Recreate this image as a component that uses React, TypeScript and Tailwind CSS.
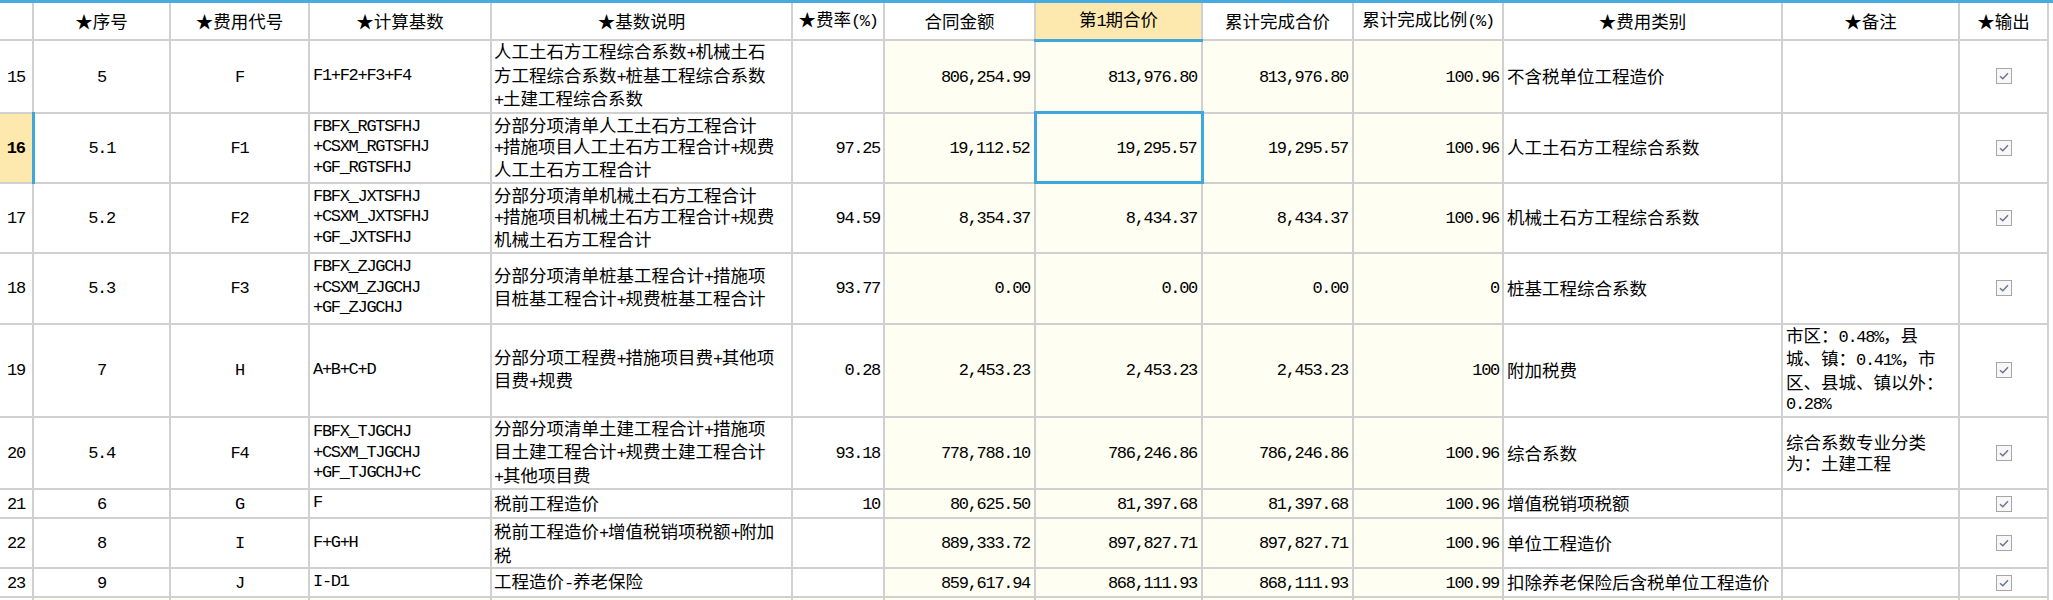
import React from "react";

type Row = {
  no: string;
  seq: string;
  code: string;
  base: string[];
  desc: string[];
  rate: string;
  contract: string;
  period: string;
  total: string;
  ratio: string;
  kind: string;
  note: string[];
  h: string;
  active?: boolean;
  tail?: boolean;
};

const MONO = "[font-family:'Liberation_Mono',monospace] text-[17px] tracking-[-1.3px]";
const GRID = "border-2 border-[#d0d0d0]";
const CREAM = "bg-[#fefef3]";

const headers = [
  "",
  "★序号",
  "★费用代号",
  "★计算基数",
  "★基数说明",
  "★费率(%)",
  "合同金额",
  "第1期合价",
  "累计完成合价",
  "累计完成比例(%)",
  "★费用类别",
  "★备注",
  "★输出",
];

const rows: Row[] = [
  {
    no: "15", seq: "5", code: "F", base: ["F1+F2+F3+F4"],
    desc: ["人工土石方工程综合系数+机械土石", "方工程综合系数+桩基工程综合系数", "+土建工程综合系数"],
    rate: "", contract: "806,254.99", period: "813,976.80", total: "813,976.80", ratio: "100.96",
    kind: "不含税单位工程造价", note: [], h: "h-[71px]",
  },
  {
    no: "16", seq: "5.1", code: "F1", base: ["FBFX_RGTSFHJ", "+CSXM_RGTSFHJ", "+GF_RGTSFHJ"],
    desc: ["分部分项清单人工土石方工程合计", "+措施项目人工土石方工程合计+规费", "人工土石方工程合计"],
    rate: "97.25", contract: "19,112.52", period: "19,295.57", total: "19,295.57", ratio: "100.96",
    kind: "人工土石方工程综合系数", note: [], h: "h-[70px]", active: true,
  },
  {
    no: "17", seq: "5.2", code: "F2", base: ["FBFX_JXTSFHJ", "+CSXM_JXTSFHJ", "+GF_JXTSFHJ"],
    desc: ["分部分项清单机械土石方工程合计", "+措施项目机械土石方工程合计+规费", "机械土石方工程合计"],
    rate: "94.59", contract: "8,354.37", period: "8,434.37", total: "8,434.37", ratio: "100.96",
    kind: "机械土石方工程综合系数", note: [], h: "h-[70px]",
  },
  {
    no: "18", seq: "5.3", code: "F3", base: ["FBFX_ZJGCHJ", "+CSXM_ZJGCHJ", "+GF_ZJGCHJ"],
    desc: ["分部分项清单桩基工程合计+措施项", "目桩基工程合计+规费桩基工程合计"],
    rate: "93.77", contract: "0.00", period: "0.00", total: "0.00", ratio: "0",
    kind: "桩基工程综合系数", note: [], h: "h-[71px]",
  },
  {
    no: "19", seq: "7", code: "H", base: ["A+B+C+D"],
    desc: ["分部分项工程费+措施项目费+其他项", "目费+规费"],
    rate: "0.28", contract: "2,453.23", period: "2,453.23", total: "2,453.23", ratio: "100",
    kind: "附加税费", note: ["市区：0.48%，县", "城、镇：0.41%，市", "区、县城、镇以外：", "0.28%"], h: "h-[91px]",
  },
  {
    no: "20", seq: "5.4", code: "F4", base: ["FBFX_TJGCHJ", "+CSXM_TJGCHJ", "+GF_TJGCHJ+C"],
    desc: ["分部分项清单土建工程合计+措施项", "目土建工程合计+规费土建工程合计", "+其他项目费"],
    rate: "93.18", contract: "778,788.10", period: "786,246.86", total: "786,246.86", ratio: "100.96",
    kind: "综合系数", note: ["综合系数专业分类", "为：土建工程"], h: "h-[70px]",
  },
  {
    no: "21", seq: "6", code: "G", base: ["F"], desc: ["税前工程造价"],
    rate: "10", contract: "80,625.50", period: "81,397.68", total: "81,397.68", ratio: "100.96",
    kind: "增值税销项税额", note: [], h: "h-[29px]",
  },
  {
    no: "22", seq: "8", code: "I", base: ["F+G+H"], desc: ["税前工程造价+增值税销项税额+附加", "税"],
    rate: "", contract: "889,333.72", period: "897,827.71", total: "897,827.71", ratio: "100.96",
    kind: "单位工程造价", note: [], h: "h-[50px]",
  },
  {
    no: "23", seq: "9", code: "J", base: ["I-D1"], desc: ["工程造价-养老保险"],
    rate: "", contract: "859,617.94", period: "868,111.93", total: "868,111.93", ratio: "100.99",
    kind: "扣除养老保险后含税单位工程造价", note: [], h: "h-[29px]",
  },
  {
    no: "24", seq: "10", code: "K", base: ["J+G"], desc: ["税前工程造价+增值税销项税额+附加", "税-养老保险", "合计"],
    rate: "", contract: "", period: "", total: "", ratio: "",
    kind: "", note: [], h: "h-[70px]", tail: true,
  },
];

// ascii runs get the narrow serif mono, everything else stays CJK
function Mixed({ text }: { text: string }) {
  const parts = text.split(/([\x20-\x7e]+)/).filter(Boolean);
  return (
    <>
      {parts.map((p, i) =>
        /^[\x20-\x7e]+$/.test(p) ? (
          <span key={i} className={MONO}>
            {p}
          </span>
        ) : (
          <span key={i}>{p}</span>
        )
      )}
    </>
  );
}

function Lines({ lines }: { lines: string[] }) {
  return (
    <>
      {lines.map((l, i) => (
        <div key={i} className="whitespace-nowrap">
          <Mixed text={l} />
        </div>
      ))}
    </>
  );
}

function Check() {
  return (
    <svg width="16" height="16" viewBox="0 0 16 16" className="mx-auto block">
      <rect x="0.5" y="0.5" width="15" height="15" fill="#f7f7f7" stroke="#a6a6a6" />
      <path d="M4 8.2 L6.8 10.8 L12 5.2" fill="none" stroke="#6a7389" strokeWidth="1.4" />
    </svg>
  );
}

export default function App() {
  return (
    <div className="h-[600px] w-[2053px] overflow-hidden bg-white text-black [font-family:'Noto_Sans_CJK_SC',sans-serif] text-[17.5px] leading-[20.5px]">
      <div className="h-[3px] bg-[#47abdf]" />
      <table className="w-[2048px] table-fixed border-collapse">
        <colgroup>
          <col className="w-[33px]" />
          <col className="w-[137px]" />
          <col className="w-[139px]" />
          <col className="w-[182px]" />
          <col className="w-[301px]" />
          <col className="w-[92px]" />
          <col className="w-[151px]" />
          <col className="w-[167px]" />
          <col className="w-[151px]" />
          <col className="w-[150px]" />
          <col className="w-[279px]" />
          <col className="w-[177px]" />
          <col className="w-[89px]" />
        </colgroup>
        <thead>
          <tr className="h-[37px]">
            {headers.map((h, i) => (
              <th
                key={i}
                className={
                  "p-0 text-center align-middle font-normal whitespace-nowrap " +
                  (i === 7
                    ? "border-x-2 border-x-[#d0d0d0] border-b-[3px] border-b-[#3ea8dc] bg-[#fde9ae] font-bold"
                    : i === 0
                      ? "border-b-2 border-r-2 border-[#d0d0d0] bg-white"
                      : "border-x-2 border-b-2 border-[#d0d0d0] bg-white")
                }
              >
                <Mixed text={h} />
              </th>
            ))}
          </tr>
        </thead>
        <tbody>
          {rows.map((r) => {
            const bg = r.tail ? CREAM : "bg-white";
            return (
              <tr key={r.no} className={r.h}>
                <td
                  className={
                    "p-0 text-center align-middle " +
                    (r.active
                      ? "border-y-2 border-y-[#d0d0d0] border-r-[3px] border-r-[#3ea8dc] bg-[#fde9ae] font-bold"
                      : "border-y-2 border-r-2 border-[#d0d0d0] bg-white")
                  }
                >
                  <span className={MONO}>{r.no}</span>
                </td>
                <td className={`${GRID} ${bg} p-0 text-center align-middle`}>
                  <span className={MONO}>{r.seq}</span>
                </td>
                <td className={`${GRID} ${bg} p-0 text-center align-middle`}>
                  <span className={MONO}>{r.code}</span>
                </td>
                <td className={`${GRID} ${bg} overflow-hidden px-[3px] py-0 text-left align-middle`}>
                  {r.base.map((b, i) => (
                    <div key={i} className={`${MONO} whitespace-nowrap leading-[20.5px]`}>
                      {b}
                    </div>
                  ))}
                </td>
                <td className={`${GRID} ${bg} overflow-hidden py-0 pl-[2px] pr-0 text-left align-middle`}>
                  <Lines lines={r.desc} />
                </td>
                <td className={`${GRID} ${bg} py-0 pl-0 pr-[3px] text-right align-middle`}>
                  <span className={MONO}>{r.rate}</span>
                </td>
                <td className={`${GRID} ${CREAM} py-0 pl-0 pr-[4px] text-right align-middle`}>
                  <span className={MONO}>{r.contract}</span>
                </td>
                <td
                  className={
                    CREAM +
                    " py-0 pl-0 pr-[4px] text-right align-middle " +
                    (r.active ? "border-[3px] border-[#3ea8dc]" : GRID)
                  }
                >
                  <span className={MONO}>{r.period}</span>
                </td>
                <td className={`${GRID} ${CREAM} py-0 pl-0 pr-[4px] text-right align-middle`}>
                  <span className={MONO}>{r.total}</span>
                </td>
                <td className={`${GRID} ${CREAM} py-0 pl-0 pr-[3px] text-right align-middle`}>
                  <span className={MONO}>{r.ratio}</span>
                </td>
                <td className={`${GRID} ${bg} overflow-hidden px-[3px] py-0 text-left align-middle whitespace-nowrap`}>
                  {r.kind}
                </td>
                <td className={`${GRID} ${bg} overflow-hidden px-[3px] py-0 text-left align-middle`}>
                  <Lines lines={r.note} />
                </td>
                <td className={`${GRID} ${bg} p-0 text-center align-middle`}>
                  {!r.tail && <Check />}
                </td>
              </tr>
            );
          })}
        </tbody>
      </table>
    </div>
  );
}
